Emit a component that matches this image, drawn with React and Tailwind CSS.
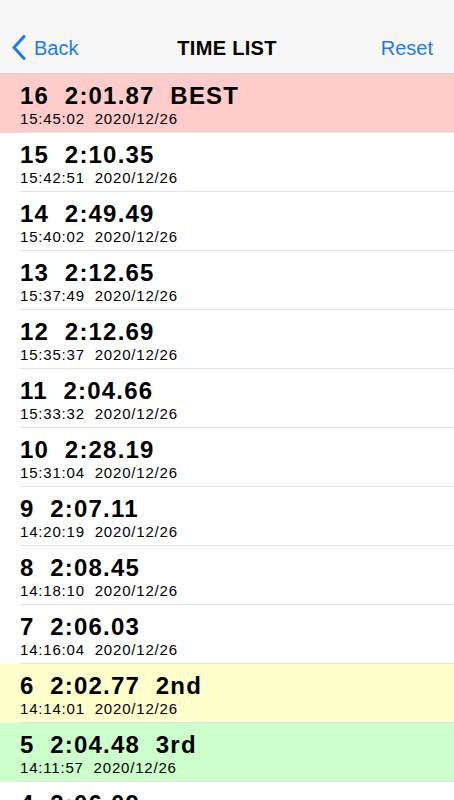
import React from 'react';

// lap records, newest first
const laps = [
  { no: 16, time: '2:01.87', at: '15:45:02', tag: 'BEST', bg: 'bg-[#ffcccc]' },
  { no: 15, time: '2:10.35', at: '15:42:51' },
  { no: 14, time: '2:49.49', at: '15:40:02' },
  { no: 13, time: '2:12.65', at: '15:37:49' },
  { no: 12, time: '2:12.69', at: '15:35:37' },
  { no: 11, time: '2:04.66', at: '15:33:32' },
  { no: 10, time: '2:28.19', at: '15:31:04' },
  { no: 9, time: '2:07.11', at: '14:20:19' },
  { no: 8, time: '2:08.45', at: '14:18:10' },
  { no: 7, time: '2:06.03', at: '14:16:04' },
  { no: 6, time: '2:02.77', at: '14:14:01', tag: '2nd', bg: 'bg-[#ffffcc]' },
  { no: 5, time: '2:04.48', at: '14:11:57', tag: '3rd', bg: 'bg-[#ccffcc]' },
  { no: 4, time: '2:06.09', at: '14:09:53' },
];

const LapRow = ({ lap }) => {
  const title = `${lap.no}  ${lap.time}${lap.tag ? '  ' + lap.tag : ''}`;
  return (
    <div className={`h-[59px] shrink-0 ${lap.bg || 'bg-white'}`}>
      <div className="h-full ml-[20px] pt-[8px] border-b border-[#e2e2e2]">
        <div className="whitespace-pre text-[24px] leading-[28px] font-bold tracking-[1.2px] text-black">
          {title}
        </div>
        <div className="whitespace-pre text-[15px] leading-[18px] tracking-[0.8px] text-black">
          {`${lap.at}  2020/12/26`}
        </div>
      </div>
    </div>
  );
};

const App = () => {
  return (
    <div
      className="w-[454px] h-[800px] overflow-hidden flex flex-col bg-white"
      style={{ fontFamily: "'Liberation Sans', Arial, sans-serif" }}
    >
      {/* Navigation bar */}
      <div className="h-[74px] shrink-0 pt-[22px] bg-[#f7f7f7] border-b border-[#d6d6d6]">
        <div className="h-[51px] grid grid-cols-[1fr_auto_1fr] items-center px-[12px]">
          <div className="flex items-center gap-[8px] text-[#1c7ce6]">
            <svg width="14" height="25" viewBox="0 0 14 25" fill="none">
              <polyline
                points="12,1.5 2,12.5 12,23.5"
                stroke="#1c7ce6"
                strokeWidth="3"
                strokeLinecap="round"
                strokeLinejoin="round"
              />
            </svg>
            <span className="text-[20px] leading-none">Back</span>
          </div>
          <div className="text-[20px] font-bold text-black leading-none tracking-[0.3px]">TIME LIST</div>
          <div className="text-right pr-[9px] text-[20px] leading-none text-[#1c7ce6]">Reset</div>
        </div>
      </div>

      {/* Lap list */}
      <div className="flex flex-col">
        {laps.map((lap) => (
          <LapRow key={lap.no} lap={lap} />
        ))}
      </div>
    </div>
  );
};

export default App;
